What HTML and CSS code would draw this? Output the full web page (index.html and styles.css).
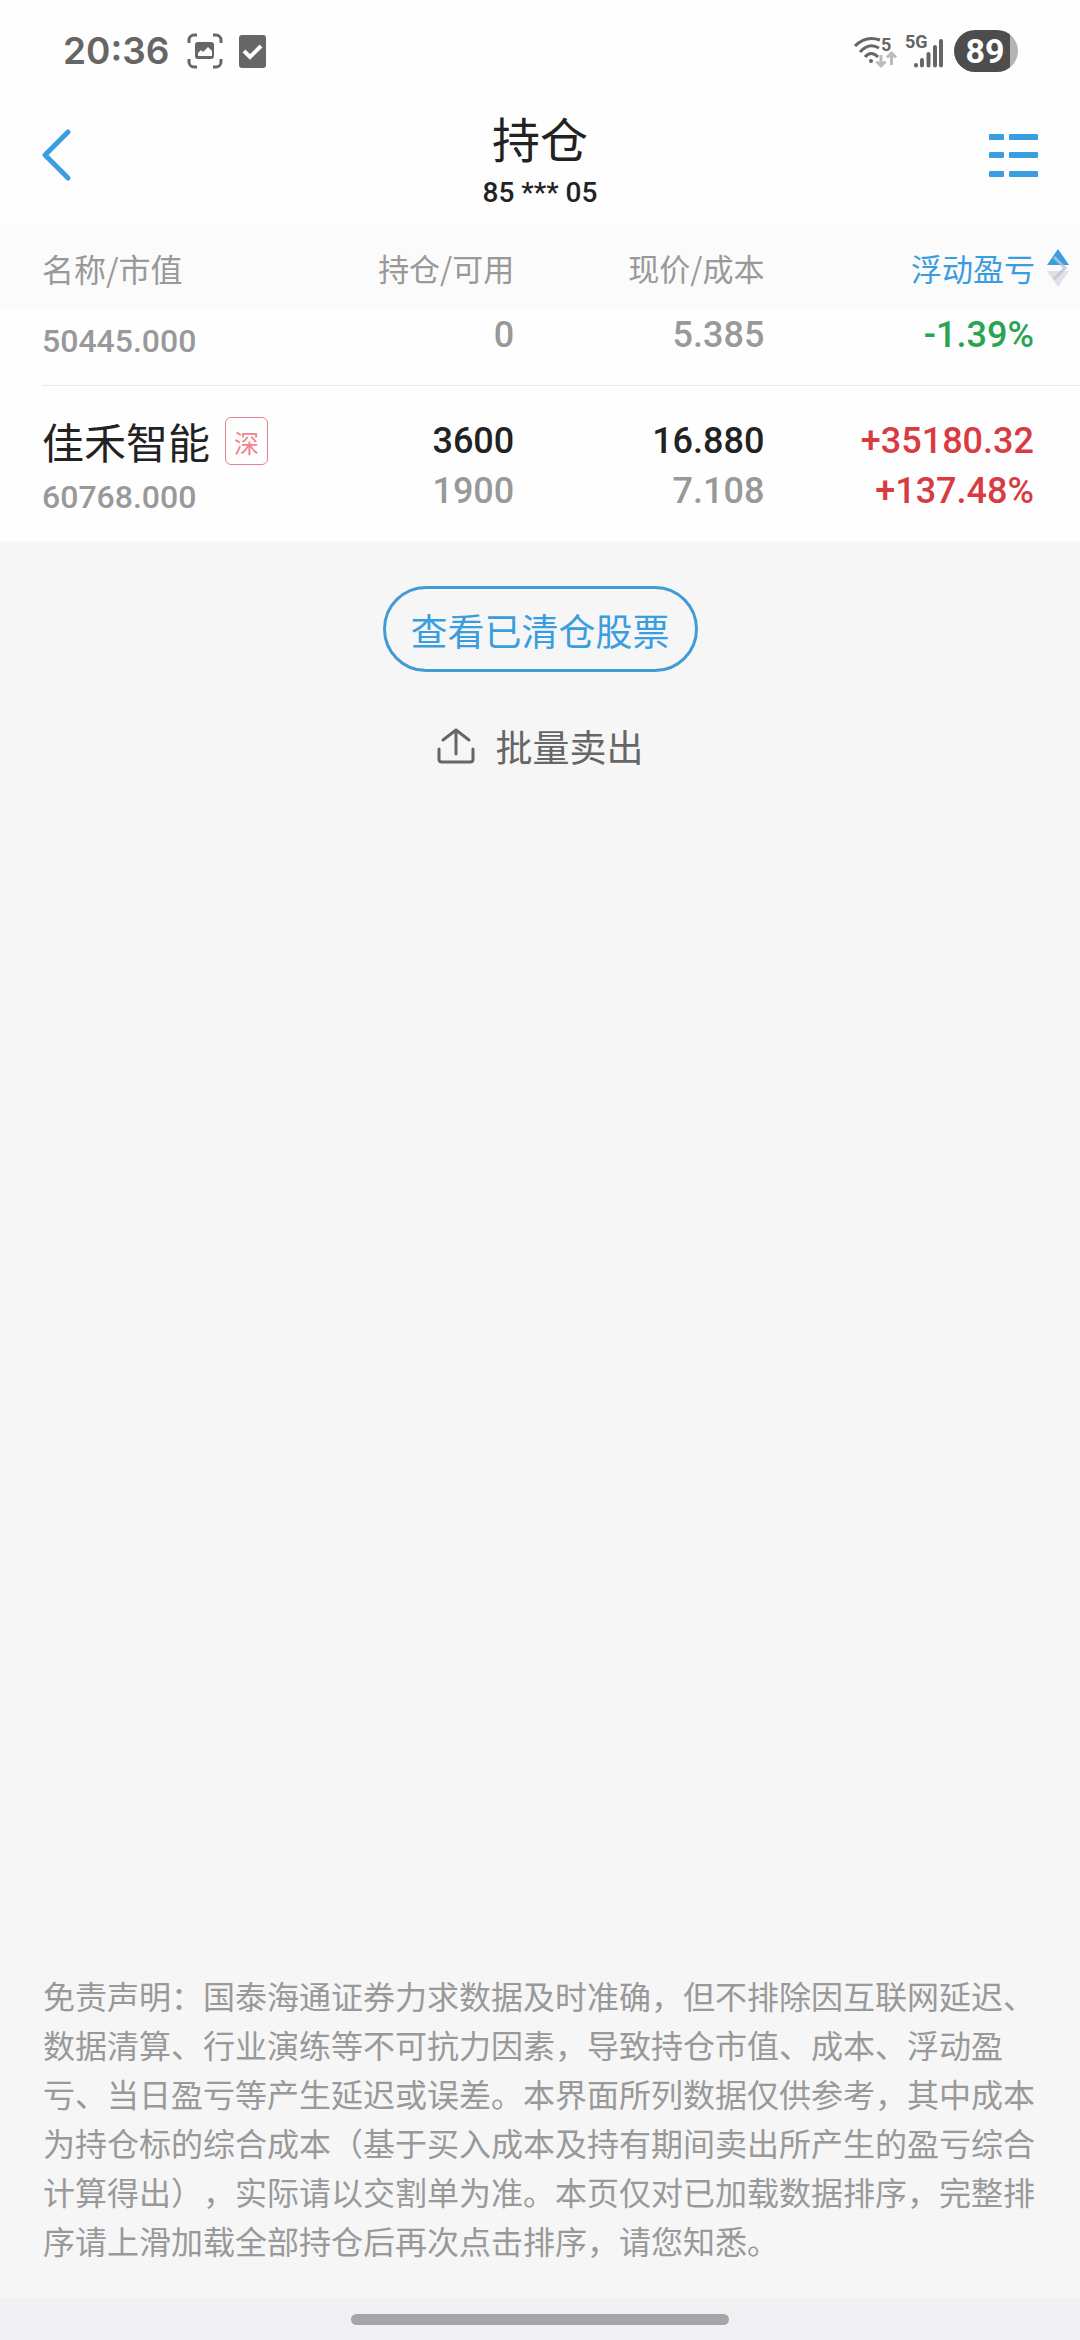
FILE: index.html
```html
<!DOCTYPE html>
<html lang="zh-CN">
<head>
    <meta charset="UTF-8">
    <meta name="viewport" content="width=device-width, initial-scale=1.0">
    <title>持仓</title>
    <link rel="stylesheet" href="styles.css">
</head>
<body>

    <div class="status-bar">
        <div class="status-left">
            <span class="clock">20:36</span>
            <svg class="icon-capture" width="36" height="36" viewBox="0 0 36 36" fill="none">
                <path d="M2 10V7a5 5 0 0 1 5-5h3M26 2h3a5 5 0 0 1 5 5v3M34 26v3a5 5 0 0 1-5 5h-3M10 34H7a5 5 0 0 1-5-5v-3" stroke="#666" stroke-width="3"/>
                <rect x="8" y="9" width="19" height="17" rx="3" fill="#666"/>
                <path d="M11 23v-3l3-3 2 2 5-5 4 4v5z" fill="#fefefe"/>
            </svg>
            <svg width="27" height="33" viewBox="0 0 27 33" fill="none">
                <rect width="27" height="33" rx="3" fill="#666"/>
                <path d="M5 16l6 6 11-11" stroke="#fefefe" stroke-width="4"/>
            </svg>
        </div>
        <div class="status-right">
            <svg class="icon-wifi" width="43" height="36" viewBox="0 0 43 36" fill="none">
                <g stroke="#666" stroke-width="3">
                    <path d="M1 13Q12 2 26 7"/>
                    <path d="M6 19Q15 9 25 15"/>
                    <path d="M11 24Q17 17 24 24"/>
                </g>
                <circle cx="17" cy="28" r="2" fill="#666"/>
                <text x="27" y="18" class="net-text">5</text>
                <path d="M27 22v11M22.500 28.500l4.500 4.500 4.500-4.500M37.500 32V20M33 24.500l4.500-4.500 4.500 4.500" stroke="#bbb" stroke-width="3"/>
            </svg>
            <svg class="icon-signal" width="40" height="36" viewBox="0 0 40 36" fill="none">
                <text x="0" y="15" class="net-text">5G</text>
                <g stroke="#666" stroke-width="4" stroke-linecap="round">
                    <path d="M11 32v.5M17 27v5.500M23.500 21v11.500M30 14v18.500M36 8v24.500"/>
                </g>
            </svg>
            <span class="battery">89</span>
        </div>
    </div>

    <header class="nav">
        <button type="button" class="nav-btn" aria-label="返回">
            <svg width="30" height="52" viewBox="0 0 30 52" fill="none" stroke="#3a9de0" stroke-width="5" stroke-linecap="round" stroke-linejoin="round">
                <path d="M26 3L3 26l23 23"/>
            </svg>
        </button>
        <div class="nav-title">
            <h1>持仓</h1>
            <p>85 *** 05</p>
        </div>
        <button type="button" class="nav-btn nav-menu" aria-label="菜单">
            <svg width="49" height="43" viewBox="0 0 49 43" fill="#3a9de0">
                <rect x="0" y="0" width="15" height="6" rx="1"/>
                <rect x="20" y="0" width="29" height="6" rx="1"/>
                <rect x="0" y="18" width="15" height="6" rx="1"/>
                <rect x="20" y="18" width="29" height="6" rx="1"/>
                <rect x="0" y="37" width="15" height="6" rx="1"/>
                <rect x="20" y="37" width="29" height="6" rx="1"/>
            </svg>
        </button>
    </header>

    <main>
        <div class="holdings">
            <table class="holdings-table">
                <thead>
                    <tr>
                        <th class="col-name">名称/市值</th>
                        <th class="col-amount">持仓/可用</th>
                        <th class="col-price">现价/成本</th>
                        <th class="col-profit">
                            <button type="button" class="sort-btn">浮动盈亏
                                <svg class="sort-icon" width="22" height="38" viewBox="0 0 22 38">
                                    <path d="M11 0l11 16H0z" fill="#3a9de0"/>
                                    <path d="M0 22h22L11 38z" fill="#dfe1e4"/>
                                    <path d="M7 8l11 11L7 30" fill="none" stroke="#bcc6d4" stroke-width="3" stroke-opacity="0.8"/>
                                </svg>
                            </button>
                        </th>
                    </tr>
                </thead>
                <tbody>
                    <tr>
                        <td><span class="market-value">50445.000</span></td>
                        <td><span class="num muted">0</span></td>
                        <td><span class="num muted">5.385</span></td>
                        <td><span class="num down">-1.39%</span></td>
                    </tr>
                    <tr class="full-row">
                        <td>
                            <div class="stock-name">佳禾智能<span class="market-tag">深</span></div>
                            <span class="market-value">60768.000</span>
                        </td>
                        <td><span class="num">3600</span><span class="num muted">1900</span></td>
                        <td><span class="num">16.880</span><span class="num muted">7.108</span></td>
                        <td><span class="num up">+35180.32</span><span class="num up">+137.48%</span></td>
                    </tr>
                </tbody>
            </table>
        </div>

        <div class="actions">
            <button type="button" class="btn-outline">查看已清仓股票</button>
            <button type="button" class="btn-text">
                <svg width="38" height="36" viewBox="0 0 38 36" fill="none" stroke="#666" stroke-width="3" stroke-linecap="round" stroke-linejoin="round">
                    <path d="M2 21v10q0 3 3 3h28q3 0 3-3V21M19 26V2M6 12L19 2l13 10"/>
                </svg>
                批量卖出
            </button>
        </div>
    </main>

    <footer>
        <p class="disclaimer">免责声明：国泰海通证券力求数据及时准确，但不排除因互联网延迟、数据清算、行业演练等不可抗力因素，导致持仓市值、成本、浮动盈亏、当日盈亏等产生延迟或误差。本界面所列数据仅供参考，其中成本为持仓标的综合成本（基于买入成本及持有期间卖出所产生的盈亏综合计算得出），实际请以交割单为准。本页仅对已加载数据排序，完整排序请上滑加载全部持仓后再次点击排序，请您知悉。</p>
        <div class="home-bar"><span></span></div>
    </footer>

</body>
</html>
```
FILE: styles.css
```css
* {
    box-sizing: border-box;
}

body {
    margin: 0;
    min-height: 100vh;
    display: flex;
    flex-direction: column;
    background: #f6f6f6;
    color: #222;
    font-family: "Noto Sans CJK SC", sans-serif;
}

button {
    border: none; background: none; padding: 0; margin: 0;
    color: inherit; font: inherit; cursor: pointer;
}

svg { display: block; flex: none; overflow: visible; }

/* status bar */
.status-bar {
    display: flex; justify-content: space-between; align-items: center;
    height: 100px; padding: 2px 62px 0 63px; background: #fefefe;
}

.status-left, .status-right { display: flex; align-items: center; }

.clock {
    font-family: Inter, sans-serif; font-size: 37px; font-weight: 600;
    line-height: 48px; color: #666;
}

.icon-capture { margin: 0 16px 0 18px; }
.icon-wifi { margin-right: 8px; }
.icon-signal { margin-right: 9px; }

.net-text {
    font-family: Roboto, sans-serif; font-size: 18px; font-weight: 700; fill: #666;
}

.battery {
    width: 64px; height: 42px; padding-right: 2px; border-radius: 21px;
    background: linear-gradient(90deg, #4d4d4d 88%, #b3b3b3 88%);
    color: #fff; font-family: Roboto, sans-serif; font-size: 34px;
    font-weight: 700; line-height: 42px; text-align: center;
}

/* title bar */
.nav {
    display: flex; justify-content: space-between; align-items: flex-start;
    height: 125px; padding: 1px 42px 0; background: #fefefe;
}

.nav-btn { display: flex; align-items: center; width: 50px; height: 108px; }
.nav-menu { justify-content: flex-end; }

.nav-title { text-align: center; }
.nav-title h1 { margin: 0; font-size: 48px; font-weight: 400; line-height: 72px; }
.nav-title p {
    margin: 0; font-family: Roboto, sans-serif; font-size: 28px;
    font-weight: 500; line-height: 40px;
}

/* holdings */
.holdings { padding-left: 42px; background: #fefefe; }

.holdings-table {
    width: 100%; table-layout: fixed; border-collapse: separate; border-spacing: 0;
}

.holdings-table th {
    height: 84px; padding: 2px 0 0; background: #fbfbfb; color: #999;
    font-size: 31px; font-weight: 400; line-height: 48px; text-align: right;
}

.holdings-table th.col-name {
    width: 25%; font-size: 32px; text-align: left; box-shadow: -42px 0 0 #fbfbfb;
}
.holdings-table th.col-amount { width: 20.5%; }
.holdings-table th.col-price { width: 24.1%; }

.sort-btn {
    display: flex; justify-content: flex-end; align-items: center; gap: 12px;
    width: 100%; padding-right: 11px; color: #3a9de0;
}

.holdings-table td {
    padding: 1px 0 25px; text-align: right; vertical-align: top;
    border-bottom: 1px solid #e8e8e8;
}
.holdings-table td:first-child {
    padding-bottom: 20px; text-align: left; vertical-align: bottom;
}
.holdings-table td:last-child { padding-right: 46px; }
.holdings-table .full-row td { padding-top: 30px; border-bottom: none; }
.holdings-table .full-row td:first-child { padding-top: 23px; }

.stock-name {
    display: flex; align-items: center; font-size: 42px; line-height: 64px;
}

.market-tag {
    width: 43px; height: 48px; margin-left: 15px; border: 1px solid #df858c;
    border-radius: 6px; color: #f0848a; font-size: 25px; line-height: 48px;
    text-align: center;
}

.num, .market-value {
    display: block; font-family: Roboto, sans-serif; font-weight: 500;
}
.num { font-size: 36px; line-height: 50px; }
.market-value { font-size: 32px; line-height: 48px; color: #999; }

.muted { color: #999; }
.up { color: #d83b41; }
.down { color: #28a452; }

/* actions */
.actions {
    display: flex; flex-direction: column; align-items: center; gap: 44px;
    padding-top: 45px; font-size: 37px; line-height: 60px;
}

.btn-outline {
    padding: 11px 25px 9px; border: 3px solid #429bd6; border-radius: 43px;
    color: #3a9de0;
}

.btn-text { display: flex; align-items: center; gap: 21px; color: #666; }

/* footer */
footer { margin-top: auto; }

.disclaimer {
    margin: 0; padding: 0 43px 33px; color: #999;
    font-size: 32px; line-height: 49px; text-spacing-trim: space-all;
}

.home-bar {
    display: flex; justify-content: center; align-items: center;
    height: 42px; background: #f0f0f2;
}
.home-bar span { width: 35%; height: 11px; border-radius: 6px; background: #a5a5a7; }
```
